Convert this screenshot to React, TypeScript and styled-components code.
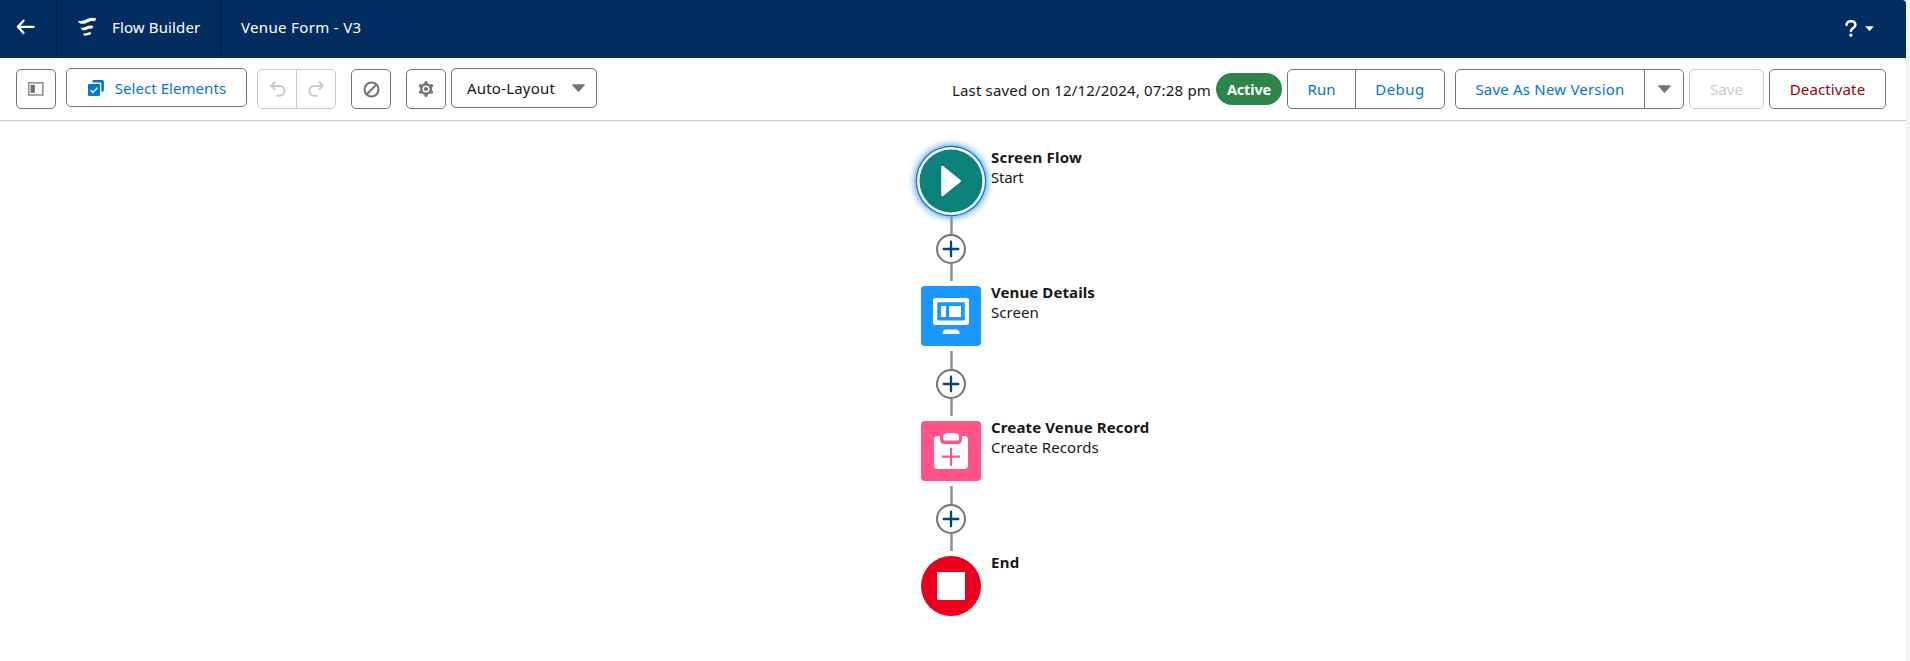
import React from 'react';
import styled, { createGlobalStyle, css } from 'styled-components';

const GlobalStyle = createGlobalStyle`
  *, *::before, *::after { box-sizing: border-box; }
  body {
    margin: 0;
    background: #f3f3f3;
    color: #181818;
    font-family: "Noto Sans", "Open Sans", sans-serif;
    font-size: 15px;
  }
`;

const Page = styled.div`
  display: flex;
  flex-direction: column;
  width: 1906px;
  height: 661px;
  background: #fff;
  border-top-right-radius: 4px;
  overflow: hidden;
`;

const Header = styled.header`
  display: flex;
  flex: none;
  height: 58px;
  background: #032d60;
  color: #fff;
`;

const HeaderCell = styled.div<{ $divider?: boolean }>`
  display: flex;
  align-items: center;
  padding-bottom: 4px;
  ${(p) => p.$divider && css`border-right: 1px solid #011e44;`}
`;

const BackCell = styled(HeaderCell)`
  width: 57px;
  padding-left: 16px;
`;

const BrandCell = styled(HeaderCell)`
  width: 164px;
  padding-left: 21px;
  gap: 14px;
`;

const FlowName = styled(HeaderCell)`
  padding-left: 20px;
`;

const HelpButton = styled(HeaderCell)`
  margin-left: auto;
  padding: 0 32px 1px 0;
  gap: 8px;
`;

const Text = styled.span<{ $track?: number }>`
  letter-spacing: ${(p) => p.$track ?? 0}px;
  line-height: 20px;
  white-space: nowrap;
`;

const HeaderText = styled(Text)`
  padding-bottom: 1px;
`;

const Toolbar = styled.div`
  display: flex;
  flex: none;
  align-items: flex-start;
  height: 63px;
  padding: 11px 20px 0 16px;
  border-bottom: 1px solid #c9c9c9;
`;

const ToolGroup = styled.div<{ $gap?: number; $before?: number }>`
  display: flex;
  align-items: flex-start;
  gap: ${(p) => p.$gap ?? 0}px;
  margin-left: ${(p) => p.$before ?? 0}px;
`;

const tones = { brand: '#0176d3', neutral: '#181818', icon: '#747474', disabled: '#c9c9c9', danger: '#8e030f' };

const Button = styled.button<{ $w: number; $tone?: keyof typeof tones }>`
  display: flex;
  align-items: center;
  justify-content: center;
  width: ${(p) => p.$w}px;
  height: 40px;
  padding: 0;
  background: #fff;
  border: 1px solid ${(p) => (p.$tone === 'disabled' ? '#c9c9c9' : '#747474')};
  border-radius: 5px;
  color: ${(p) => tones[p.$tone ?? 'brand']};
  font: inherit;
`;

const SelectButton = styled(Button)`
  height: 39px;
  margin-top: -1px;
  gap: 11px;
  padding-left: 1px;
`;

const UndoButton = styled(Button)`
  padding-left: 2px;
`;

const LayoutPicker = styled(Button)`
  margin-top: -1px;
  justify-content: space-between;
  padding: 0 11px 0 15px;
`;

const LayoutName = styled(Text)`
  color: #181818;
`;

const ButtonGroup = styled.div`
  display: flex;
  & > :not(:last-child) { border-top-right-radius: 0; border-bottom-right-radius: 0; }
  & > :not(:first-child) { margin-left: -1px; border-top-left-radius: 0; border-bottom-left-radius: 0; }
`;

const Status = styled.div`
  display: flex;
  align-items: center;
  height: 40px;
  margin-left: auto;
  gap: 5px;
`;

const SavedAt = styled(Text)`
  padding-top: 2px;
`;

const Badge = styled.span`
  display: flex;
  align-items: center;
  justify-content: center;
  width: 66px;
  height: 32px;
  border-radius: 16px;
  background: #2e844a;
  color: #fff;
  font-size: 14.5px;
  font-weight: 700;
  letter-spacing: -0.15px;
`;

const Canvas = styled.main`
  display: flex;
  flex: 1;
  flex-direction: column;
  padding: 30px 0 0 921px;
`;

const Node = styled.div`
  display: flex;
  height: 60px;
  gap: 9px;
`;

const shapes = {
  start: css`
    background: #0b827c;
    border-radius: 50%;
    box-shadow: 0 0 0 1.5px #0b827c, 0 0 0 4px #fff, 0 0 0 5.2px #0176d3, 0 0 9px 5px #0176d3;
  `,
  screen: css`background: #1b96ff; border-radius: 4px;`,
  create: css`background: #ff538a; border-radius: 4px;`,
  end: css`background: #ea001e; border-radius: 50%;`,
};

const NodeIcon = styled.div<{ $kind: keyof typeof shapes }>`
  flex: none;
  width: 60px;
  height: 60px;
  ${(p) => shapes[p.$kind]}
  & > svg { display: block; }
`;

const NodeLabel = styled.div`
  display: flex;
  flex-direction: column;
  margin-top: -4px;
  padding-left: 1px;
`;

const NodeTitle = styled(Text)`
  font-weight: 700;
`;

const Connector = styled.div`
  display: flex;
  flex-direction: column;
  align-items: center;
  width: 60px;
  height: 75px;
  padding: 5px 0;
`;

const Line = styled.div`
  flex: 1;
  width: 3px;
  margin-left: 1px;
  background: #919191;
  border: solid #a9a9a9;
  border-width: 0 1px;
`;

const AddButton = styled.button`
  display: grid;
  flex: none;
  place-items: center;
  width: 30px;
  height: 30px;
  padding: 0;
  border: 2px solid #747474;
  border-radius: 50%;
  background: #fff;
`;

const Caret = ({ w = 13, h = 8 }: { w?: number; h?: number }) => (
  <svg width={w} height={h} viewBox="0 0 13 8"><path d="M.7.2h11.6c.6 0 .8.6.4 1L7.1 7.6c-.3.4-.9.4-1.2 0L.3 1.2C-.1.8.1.2.7.2Z" fill="currentColor" /></svg>
);

const BackIcon = () => (
  <svg width="19" height="16" viewBox="0 0 19 16" fill="none" stroke="#fff" strokeWidth="2.3" strokeLinecap="round" strokeLinejoin="round">
    <path d="M7.5 1.7 1.9 7.8l5.600 6.200M2 7.8h15.700" />
  </svg>
);

const FlowIcon = () => (
  <svg width="20" height="20" viewBox="0 0 20 20" fill="#fff">
    <path d="M.1 3.700C3 4.400 5.100 4.100 8 2.600c3.600-1.900 7-2.600 10.300-1.200-.5 1.500-1.100 2.300-2 2.900-1.900-.7-3.800-.2-6.200 1C6.600 7 3.600 7.300 1.800 6.300 1 5.600.5 4.700.1 3.700Z" />
    <path d="M2.500 10.400c2.400.6 3.900.2 6-.8 2.500-1.200 4.700-1.400 6.900-.5-.4 1.200-.9 2-1.600 2.600-1.600-.5-2.900-.1-4.600.7-2.400 1.100-4 1.200-5.400.4-.6-.7-1-1.500-1.300-2.400Z" />
    <path d="M5.100 16.400c1.500.3 2.500.1 3.900-.5 1.600-.7 2.900-.9 4.300-.3-.3 1.100-.7 1.700-1.300 2.300-1-.3-1.700-.1-2.800.4-1.300.6-2.100.6-3 .1-.5-.6-.9-1.200-1.100-2Z" />
  </svg>
);

const HelpIcon = () => (
  <svg width="12" height="17" viewBox="0 0 12 17" fill="none">
    <path d="M1.500 4.900C1.700 2.700 3.500 1.300 6 1.300c2.700 0 4.400 1.500 4.400 3.600 0 3.100-4.400 3.100-4.400 6.100" stroke="#fff" strokeWidth="2.500" strokeLinecap="round" />
    <circle cx="5.900" cy="15.200" r="1.600" fill="#fff" />
  </svg>
);

const PanelIcon = () => (
  <svg width="16" height="14" viewBox="0 0 16 14">
    <rect x=".8" y=".8" width="14" height="12.200" fill="none" stroke="#8a8a8a" strokeWidth="1.500" />
    <rect x="2.600" y="2.900" width="4.200" height="8" fill="#6b6b6b" />
  </svg>
);

const SelectIcon = () => (
  <svg width="16" height="16" viewBox="0 0 16 16">
    <path d="M4.300 2.400V1.500C4.300.7 4.900.1 5.700.1h8.600c.9 0 1.600.7 1.600 1.600v8.600c0 .8-.6 1.400-1.400 1.400h-1.200V2.400Z" fill="#0176d3" />
    <rect x="0" y="4" width="12" height="12" rx="1.300" fill="#0176d3" />
    <path d="m2.700 10.200 2.200 2.200 4.500-4.700" fill="none" stroke="#fff" strokeWidth="1.500" />
  </svg>
);

const TurnIcon = ({ flip = false }: { flip?: boolean }) => (
  <svg width="16" height="16" viewBox="0 0 16 16" fill="none" stroke="#c9c9c9" strokeWidth="2" strokeLinecap="round" strokeLinejoin="round">
    <g transform={flip ? 'translate(16 0) scale(-1 1)' : undefined}>
      <path d="M4.700 1.300 1.100 4.900l3.600 3.500M1.400 4.900h8.300a4.900 4.900 0 0 1 0 9.800H7.200" />
    </g>
  </svg>
);

const BanIcon = () => (
  <svg width="17" height="17" viewBox="0 0 17 17" fill="none" stroke="#747474" strokeWidth="2.100">
    <circle cx="8.500" cy="8.500" r="7" /><path d="m3.700 13.300 9.600-9.600" />
  </svg>
);

const GearIcon = () => (
  <svg width="16" height="16" viewBox="0 0 16 16" fill="none" stroke="#747474">
    <circle cx="8" cy="8" r="4.800" strokeWidth="2.400" />
    <circle cx="8" cy="8" r="2.100" fill="#747474" stroke="none" />
    {[0, 60, 120, 180, 240, 300].map((a) => (
      <path key={a} d="M8 2.700V1.600" strokeWidth="3.200" strokeLinecap="round" transform={`rotate(${a} 8 8)`} />
    ))}
  </svg>
);

const PlusIcon = () => (
  <svg width="18" height="18" viewBox="0 0 18 18" fill="none" stroke="#014486" strokeWidth="2.300" strokeLinecap="round">
    <path d="M9 1.700v14.600M1.700 9h14.600" />
  </svg>
);

const PlayGlyph = () => (
  <svg width="60" height="60" viewBox="0 0 60 60">
    <path d="M20.200 16c0-1.300 1.300-1.700 2.200-.7l17 13.700c.8.700.8 1.300 0 2L22.400 44.700c-.9 1-2.200.6-2.200-.7Z" fill="#fff" />
  </svg>
);

const ScreenGlyph = () => (
  <svg width="60" height="60" viewBox="0 0 60 60" fill="#fff">
    <rect x="12" y="12" width="36" height="27" rx="2.500" />
    <rect x="16.200" y="16.300" width="27.600" height="18.200" rx="1" fill="#1b96ff" />
    <rect x="20" y="20" width="5" height="11" rx=".6" />
    <rect x="28" y="20" width="12" height="11" rx=".6" />
    <path d="M21.500 47.300c0-2.400 1.500-3.900 3.700-3.900h9.800c2.200 0 3.700 1.500 3.700 3.900 0 .4-.3.700-.7.700H22.200c-.4 0-.7-.3-.7-.7Z" />
  </svg>
);

const CreateGlyph = () => (
  <svg width="60" height="60" viewBox="0 0 60 60" fill="#fff">
    <path d="M16.300 15H19v3.500c0 2.800 1.700 4.500 4.500 4.500h13c2.800 0 4.500-1.700 4.500-4.500V15h2.700c1.900 0 3.300 1.400 3.300 3.300v26.400c0 1.900-1.400 3.300-3.300 3.300H16.300c-1.900 0-3.300-1.400-3.300-3.300V18.300c0-1.900 1.400-3.300 3.300-3.300Z" />
    <path d="M22 16c0-2.500 1.500-4 4-4h8c2.500 0 4 1.500 4 4v1.800c0 1-.6 1.600-1.600 1.600H23.600c-1 0-1.600-.6-1.600-1.600Z" />
    <path d="M30 27.600v16.300M21.900 35.700h16.300" fill="none" stroke="#ff538a" strokeWidth="2.200" strokeLinecap="round" />
  </svg>
);

const StopGlyph = () => (
  <svg width="60" height="60" viewBox="0 0 60 60"><rect x="16" y="16" width="28" height="28" fill="#fff" /></svg>
);

type Step = {
  kind: keyof typeof shapes;
  glyph: React.ReactNode;
  title: string;
  titleTrack: number;
  type?: string;
  typeTrack?: number;
};

const steps: Step[] = [
  { kind: 'start', glyph: <PlayGlyph />, title: 'Screen Flow', titleTrack: 0.22, type: 'Start', typeTrack: -0.25 },
  { kind: 'screen', glyph: <ScreenGlyph />, title: 'Venue Details', titleTrack: 0.1, type: 'Screen', typeTrack: 0.05 },
  { kind: 'create', glyph: <CreateGlyph />, title: 'Create Venue Record', titleTrack: 0.13, type: 'Create Records', typeTrack: 0.1 },
  { kind: 'end', glyph: <StopGlyph />, title: 'End', titleTrack: 0.3 },
];

export default function App() {
  return (
    <>
      <GlobalStyle />
      <Page>
        <Header>
          <BackCell $divider><BackIcon /></BackCell>
          <BrandCell $divider><FlowIcon /><HeaderText $track={0.13}>Flow Builder</HeaderText></BrandCell>
          <FlowName><HeaderText $track={0.34}>Venue Form - V3</HeaderText></FlowName>
          <HelpButton><HelpIcon /><Caret w={9} h={5} /></HelpButton>
        </Header>
        <Toolbar>
          <ToolGroup $gap={10}>
            <Button $w={40} $tone="icon"><PanelIcon /></Button>
            <SelectButton $w={181}><SelectIcon /><Text $track={0.05}>Select Elements</Text></SelectButton>
            <ButtonGroup>
              <UndoButton $w={40} $tone="disabled"><TurnIcon /></UndoButton>
              <Button $w={40} $tone="disabled"><TurnIcon flip /></Button>
            </ButtonGroup>
          </ToolGroup>
          <ToolGroup $before={15} $gap={15}>
            <Button $w={40} $tone="icon"><BanIcon /></Button>
            <ToolGroup $gap={5}>
              <Button $w={40} $tone="icon"><GearIcon /></Button>
              <LayoutPicker $w={146} $tone="icon">
                <LayoutName $track={0.2}>Auto-Layout</LayoutName><Caret />
              </LayoutPicker>
            </ToolGroup>
          </ToolGroup>
          <Status>
            <SavedAt $track={0.176}>Last saved on 12/12/2024, 07:28 pm</SavedAt>
            <Badge>Active</Badge>
          </Status>
          <ToolGroup $before={5} $gap={10}>
            <ButtonGroup>
              <Button $w={69}><Text>Run</Text></Button>
              <Button $w={90}><Text $track={0.45}>Debug</Text></Button>
            </ButtonGroup>
            <ToolGroup $gap={5}>
              <ButtonGroup>
                <Button $w={190}><Text $track={0.2}>Save As New Version</Text></Button>
                <Button $w={40} $tone="icon"><Caret /></Button>
              </ButtonGroup>
              <Button $w={75} $tone="disabled"><Text $track={0.07}>Save</Text></Button>
              <Button $w={117} $tone="danger"><Text $track={0.13}>Deactivate</Text></Button>
            </ToolGroup>
          </ToolGroup>
        </Toolbar>
        <Canvas>
          {steps.map((s, i) => (
            <React.Fragment key={s.title}>
              {i > 0 && <Connector><Line /><AddButton><PlusIcon /></AddButton><Line /></Connector>}
              <Node>
                <NodeIcon $kind={s.kind}>{s.glyph}</NodeIcon>
                <NodeLabel>
                  <NodeTitle $track={s.titleTrack}>{s.title}</NodeTitle>
                  {s.type && <Text $track={s.typeTrack}>{s.type}</Text>}
                </NodeLabel>
              </Node>
            </React.Fragment>
          ))}
        </Canvas>
      </Page>
    </>
  );
}
